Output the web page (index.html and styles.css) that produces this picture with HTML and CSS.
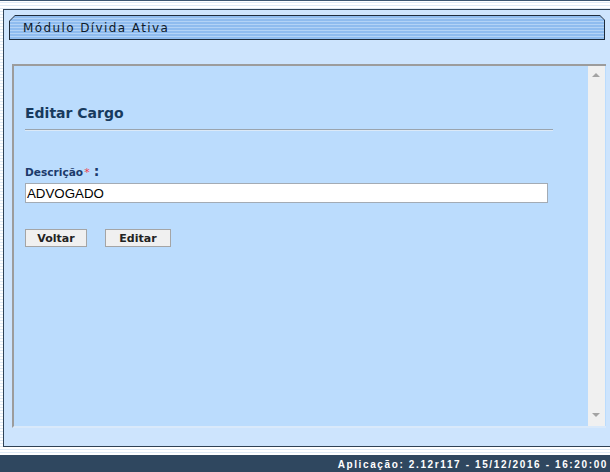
FILE: index.html
```html
<!DOCTYPE html>
<html>
<head>
<meta charset="utf-8">
<link rel="stylesheet" href="styles.css">
</head>
<body>
<div class="page">
  <div class="topline"></div>
  <div class="panel">
    <div class="tab-outer"><div class="tab"><span class="tab-title">Módulo Dívida Ativa</span></div></div>
    <div class="frame">
      <div class="content">
        <h1 class="title">Editar Cargo</h1>
        <div class="rule"></div>
        <label class="label">Descrição<span class="req">*</span><span class="colon">:</span></label>
        <div class="input">ADVOGADO</div>
        <div class="buttons">
          <button class="btn btn-voltar">Voltar</button>
          <button class="btn btn-editar">Editar</button>
        </div>
      </div>
      <div class="scrollbar">
        <span class="arrow up"></span>
        <span class="arrow down"></span>
      </div>
    </div>
  </div>
  <div class="footer"><span class="footer-text">Aplicação: 2.12r117 - 15/12/2016 - 16:20:00</span></div>
</div>
</body>
</html>
```
FILE: styles.css
```css
html, body {
  margin: 0;
  padding: 0;
}
body {
  width: 610px;
  height: 472px;
  overflow: hidden;
  font-family: "DejaVu Sans", Verdana, sans-serif;
  background: repeating-linear-gradient(to bottom, #ffffff 0px, #ffffff 2px, #dfeaf6 2px, #dfeaf6 3px);
}
.page {
  display: flex;
  flex-direction: column;
  height: 472px;
}
.topline {
  height: 1px;
  background: #3b5571;
  margin-bottom: 8px;
}
.panel {
  margin-left: 3px;
  height: 436px;
  border: 1px solid #2f4256;
  border-right: none;
  background: #cde4fd;
  display: flex;
  flex-direction: column;
}
.tab-outer {
  margin: 5px 5px 0 5px;
  height: 25px;
  background: #1e2c3c;
  clip-path: polygon(6px 0, calc(100% - 5px) 0, 100% 5px, 100% 100%, 0 100%, 0 6px);
  padding: 1px;
  box-sizing: border-box;
}
.tab {
  height: 100%;
  background: repeating-linear-gradient(to bottom, #8fbcef 0px, #8fbcef 2px, #b3d3f6 2px, #b3d3f6 3px);
  clip-path: polygon(5px 0, calc(100% - 4px) 0, 100% 4px, 100% 100%, 0 100%, 0 5px);
  display: flex;
  align-items: center;
  padding-left: 13px;
}
.tab-title {
  font-family: "DejaVu Sans", Verdana, sans-serif;
  font-size: 12px;
  letter-spacing: 1.4px;
  color: #0e1a2a;
  padding-top: 1px;
}
.frame {
  margin: 24px 0 0 8px;
  width: 594px;
  height: 364px;
  border-top: 2px solid #9c9c9c;
  border-left: 2px solid #9c9c9c;
  border-bottom: 2px solid #d9e9fa;
  box-sizing: border-box;
  background: #bbdcfd;
  display: flex;
}
.content {
  flex: 1;
  padding: 38px 0 0 11px;
}
.title {
  margin: 0;
  font-family: "DejaVu Sans", Verdana, sans-serif;
  font-size: 14px;
  font-weight: bold;
  color: #173a5e;
  height: 24px;
  line-height: 18px;
}
.rule {
  width: 528px;
  height: 1px;
  background: #9aa4ae;
  border-bottom: 1px solid #dbe9f7;
  margin-top: 1px;
}
.label {
  display: block;
  margin-top: 33px;
  font-size: 10.6px;
  font-weight: bold;
  color: #1c3a6b;
  height: 14px;
  line-height: 14px;
}
.req {
  color: #ee3a4a;
  font-weight: normal;
  font-size: 11px;
  margin-left: 1px;
}
.colon {
  font-size: 14px;
  margin-left: 4px;
  color: #1c3a6b;
}
.input {
  margin-top: 5px;
  width: 523px;
  height: 20px;
  box-sizing: border-box;
  border: 1px solid #a3abb4;
  background: #ffffff;
  font-family: "Liberation Sans", Arial, sans-serif;
  font-size: 13.3px;
  line-height: 19px;
  padding-left: 1px;
  color: #000;
}
.buttons {
  display: flex;
  gap: 18px;
  margin-top: 26px;
}
.btn {
  height: 18px;
  box-sizing: border-box;
  border: 1px solid #a5a5a5;
  background: #f0f0f0;
  font-family: "DejaVu Sans", Verdana, sans-serif;
  font-size: 11px;
  font-weight: bold;
  color: #222;
  padding: 0;
  line-height: 15px;
}
.btn-voltar { width: 62px; }
.btn-editar { width: 66px; }
.scrollbar {
  width: 17px;
  margin-right: 1px;
  background: #f0f0f0;
  position: relative;
}
.arrow {
  position: absolute;
  left: 4px;
  width: 0;
  height: 0;
  border-left: 4px solid transparent;
  border-right: 4px solid transparent;
}
.arrow.up {
  top: 7px;
  border-bottom: 4px solid #a3a3a3;
}
.arrow.down {
  bottom: 9px;
  border-top: 4px solid #a3a3a3;
}
.footer {
  margin-top: 8px;
  flex: 1;
  background: #2f475f;
  display: flex;
  align-items: center;
  justify-content: flex-end;
  padding-right: 2px;
}
.footer-text {
  font-family: "Liberation Sans", Arial, sans-serif;
  font-size: 10px;
  font-weight: bold;
  letter-spacing: 1.62px;
  color: #ffffff;
  padding-top: 1px;
}
```
